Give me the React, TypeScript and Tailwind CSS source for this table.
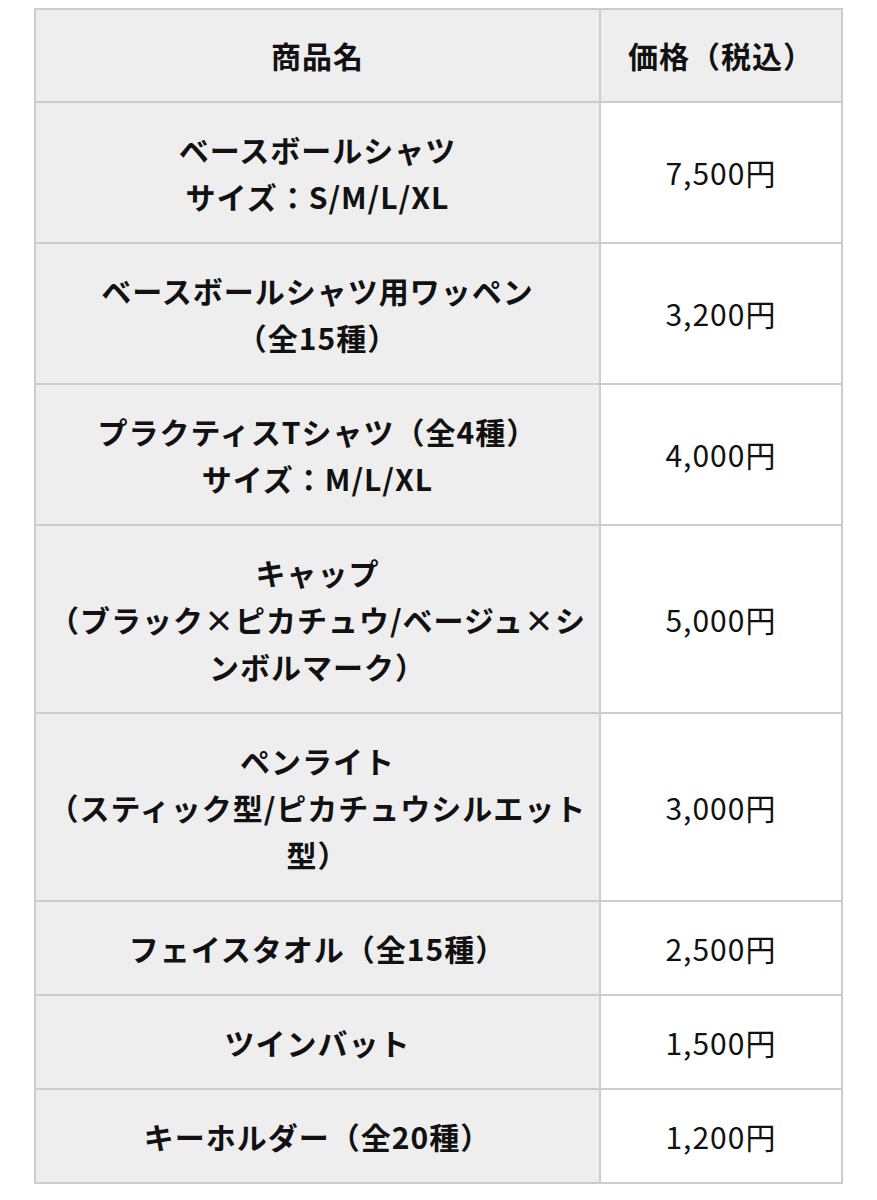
const rows: { name: string[]; price: string }[] = [
  { name: ['ベースボールシャツ', 'サイズ：S/M/L/XL'], price: '7,500円' },
  { name: ['ベースボールシャツ用ワッペン', '（全15種）'], price: '3,200円' },
  { name: ['プラクティスTシャツ（全4種）', 'サイズ：M/L/XL'], price: '4,000円' },
  { name: ['キャップ', '（ブラック×ピカチュウ/ベージュ×シンボルマーク）'], price: '5,000円' },
  { name: ['ペンライト', '（スティック型/ピカチュウシルエット型）'], price: '3,000円' },
  { name: ['フェイスタオル（全15種）'], price: '2,500円' },
  { name: ['ツインバット'], price: '1,500円' },
  { name: ['キーホルダー（全20種）'], price: '1,200円' },
];

export default function App() {
  return (
    <div
      className="min-h-[1200px] bg-white px-[34px] pt-[8px] text-[#111111]"
      style={{ fontFamily: '"Noto Sans CJK JP", "Noto Sans", sans-serif' }}
    >
      <table className="w-full border-collapse border-2 border-[#cccccc] text-[30px] leading-[47px] tracking-[1px]">
        <colgroup>
          <col className="w-[70%]" />
          <col className="w-[30%]" />
        </colgroup>
        <thead>
          <tr className="bg-[#eeeeee]">
            <th className="border-2 border-[#cccccc] py-[22px] px-3 font-bold">商品名</th>
            <th className="border-2 border-[#cccccc] py-[22px] px-3 font-bold">価格（税込）</th>
          </tr>
        </thead>
        <tbody>
          {rows.map((r) => (
            <tr key={r.price + r.name[0]}>
              <td className="border-2 border-[#cccccc] bg-[#eeeeee] py-[22.5px] px-3 text-center font-bold">
                {r.name.map((l) => (
                  <div key={l}>{l}</div>
                ))}
              </td>
              <td className="border-2 border-[#cccccc] bg-white py-[22.5px] px-3 text-center">{r.price}</td>
            </tr>
          ))}
        </tbody>
      </table>
    </div>
  );
}
